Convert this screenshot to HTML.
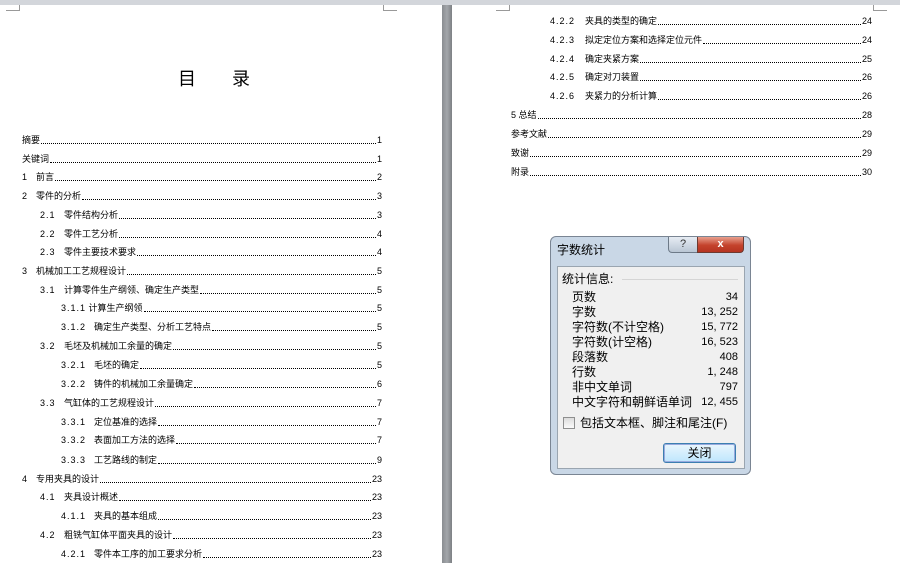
<!DOCTYPE html>
<html><head><meta charset="utf-8"><style>
*{margin:0;padding:0;box-sizing:border-box}
body{width:900px;height:563px;overflow:hidden;background:#fff;position:relative;font-family:"Liberation Sans","Noto Sans CJK SC","WenQuanYi Zen Hei",sans-serif;color:#000}
.r{position:absolute;height:12px;display:flex;align-items:flex-end;font-size:9px;line-height:11px;white-space:nowrap}
.r .f{flex:1;border-bottom:1px dotted #000;margin:0 1px 2px}
.n{display:inline-block;width:24px}
.w{letter-spacing:1px}
.dlg{position:absolute;left:550px;top:236px;width:201px;height:239px;background:#c9d7e6;border:1px solid #7a8593;border-radius:6px}
.inner{position:absolute;left:6px;top:29px;width:188px;height:203px;background:#f0f0f0;border:1px solid #9aa5b0}
.st{position:absolute;left:14px;font-size:12px;line-height:14px;white-space:nowrap}
.sv{position:absolute;right:6px;font-size:11px;line-height:14px}
</style></head><body>
<div style="position:absolute;left:0;top:0;width:900px;height:5px;background:#d3d6db"></div>
<div style="position:absolute;left:442px;top:5px;width:10px;height:558px;background:linear-gradient(90deg,#8a8d91,#a3a6aa 50%,#7d8084)"></div>
<div style="position:absolute;left:6px;top:5px;width:14px;height:6px;border-bottom:1px solid #999;border-right:1px solid #999"></div>
<div style="position:absolute;left:383px;top:5px;width:14px;height:6px;border-bottom:1px solid #999;border-left:1px solid #999"></div>
<div style="position:absolute;left:496px;top:5px;width:14px;height:6px;border-bottom:1px solid #999;border-right:1px solid #999"></div>
<div style="position:absolute;left:873px;top:5px;width:14px;height:6px;border-bottom:1px solid #999;border-left:1px solid #999"></div>
<div style="position:absolute;left:178px;top:68px;font-size:18px;line-height:22px">目</div>
<div style="position:absolute;left:232px;top:68px;font-size:18px;line-height:22px">录</div>

<div class="r" style="left:22px;right:518px;top:134px"><span>摘要</span><span class="f"></span><span>1</span></div>
<div class="r" style="left:22px;right:518px;top:153px"><span>关键词</span><span class="f"></span><span>1</span></div>
<div class="r" style="left:22px;right:518px;top:171px"><span><span style="display:inline-block;width:14px">1</span>前言</span><span class="f"></span><span>2</span></div>
<div class="r" style="left:22px;right:518px;top:190px"><span><span style="display:inline-block;width:14px">2</span>零件的分析</span><span class="f"></span><span>3</span></div>
<div class="r" style="left:40px;right:518px;top:209px"><span><span class="n w">2.1</span>零件结构分析</span><span class="f"></span><span>3</span></div>
<div class="r" style="left:40px;right:518px;top:228px"><span><span class="n w">2.2</span>零件工艺分析</span><span class="f"></span><span>4</span></div>
<div class="r" style="left:40px;right:518px;top:246px"><span><span class="n w">2.3</span>零件主要技术要求</span><span class="f"></span><span>4</span></div>
<div class="r" style="left:22px;right:518px;top:265px"><span><span style="display:inline-block;width:14px">3</span>机械加工工艺规程设计</span><span class="f"></span><span>5</span></div>
<div class="r" style="left:40px;right:518px;top:284px"><span><span class="n w">3.1</span>计算零件生产纲领、确定生产类型</span><span class="f"></span><span>5</span></div>
<div class="r" style="left:61px;right:518px;top:302px"><span><span class="w">3.1.1</span> 计算生产纲领</span><span class="f"></span><span>5</span></div>
<div class="r" style="left:61px;right:518px;top:321px"><span><span class="n w" style="width:33px">3.1.2</span>确定生产类型、分析工艺特点</span><span class="f"></span><span>5</span></div>
<div class="r" style="left:40px;right:518px;top:340px"><span><span class="n w">3.2</span>毛坯及机械加工余量的确定</span><span class="f"></span><span>5</span></div>
<div class="r" style="left:61px;right:518px;top:359px"><span><span class="n w" style="width:33px">3.2.1</span>毛坯的确定</span><span class="f"></span><span>5</span></div>
<div class="r" style="left:61px;right:518px;top:378px"><span><span class="n w" style="width:33px">3.2.2</span>铸件的机械加工余量确定</span><span class="f"></span><span>6</span></div>
<div class="r" style="left:40px;right:518px;top:397px"><span><span class="n w">3.3</span>气缸体的工艺规程设计</span><span class="f"></span><span>7</span></div>
<div class="r" style="left:61px;right:518px;top:416px"><span><span class="n w" style="width:33px">3.3.1</span>定位基准的选择</span><span class="f"></span><span>7</span></div>
<div class="r" style="left:61px;right:518px;top:434px"><span><span class="n w" style="width:33px">3.3.2</span>表面加工方法的选择</span><span class="f"></span><span>7</span></div>
<div class="r" style="left:61px;right:518px;top:454px"><span><span class="n w" style="width:33px">3.3.3</span>工艺路线的制定</span><span class="f"></span><span>9</span></div>
<div class="r" style="left:22px;right:518px;top:473px"><span><span style="display:inline-block;width:14px">4</span>专用夹具的设计</span><span class="f"></span><span>23</span></div>
<div class="r" style="left:40px;right:518px;top:491px"><span><span class="n w">4.1</span>夹具设计概述</span><span class="f"></span><span>23</span></div>
<div class="r" style="left:61px;right:518px;top:510px"><span><span class="n w" style="width:33px">4.1.1</span>夹具的基本组成</span><span class="f"></span><span>23</span></div>
<div class="r" style="left:40px;right:518px;top:529px"><span><span class="n w">4.2</span>粗铣气缸体平面夹具的设计</span><span class="f"></span><span>23</span></div>
<div class="r" style="left:61px;right:518px;top:548px"><span><span class="n w" style="width:33px">4.2.1</span>零件本工序的加工要求分析</span><span class="f"></span><span>23</span></div>

<div class="r" style="left:550px;right:28px;top:15px"><span><span class="n w" style="width:35px">4.2.2</span>夹具的类型的确定</span><span class="f"></span><span>24</span></div>
<div class="r" style="left:550px;right:28px;top:34px"><span><span class="n w" style="width:35px">4.2.3</span>拟定定位方案和选择定位元件</span><span class="f"></span><span>24</span></div>
<div class="r" style="left:550px;right:28px;top:53px"><span><span class="n w" style="width:35px">4.2.4</span>确定夹紧方案</span><span class="f"></span><span>25</span></div>
<div class="r" style="left:550px;right:28px;top:71px"><span><span class="n w" style="width:35px">4.2.5</span>确定对刀装置</span><span class="f"></span><span>26</span></div>
<div class="r" style="left:550px;right:28px;top:90px"><span><span class="n w" style="width:35px">4.2.6</span>夹紧力的分析计算</span><span class="f"></span><span>26</span></div>
<div class="r" style="left:511px;right:28px;top:109px"><span>5 总结</span><span class="f"></span><span>28</span></div>
<div class="r" style="left:511px;right:28px;top:128px"><span>参考文献</span><span class="f"></span><span>29</span></div>
<div class="r" style="left:511px;right:28px;top:147px"><span>致谢</span><span class="f"></span><span>29</span></div>
<div class="r" style="left:511px;right:28px;top:166px"><span>附录</span><span class="f"></span><span>30</span></div>

<div class="dlg">
 <div style="position:absolute;left:6px;top:6px;font-size:12px;line-height:14px">字数统计</div>
 <div style="position:absolute;left:117px;top:0;width:30px;height:16px;background:linear-gradient(#e6ecf3,#b9c6d4);border:1px solid #6d7a88;border-top:none;border-radius:0 0 0 4px;font-size:11px;text-align:center;line-height:14px;color:#333">?</div>
 <div style="position:absolute;left:146px;top:0;width:47px;height:16px;background:linear-gradient(#e9a08e,#c4422c 55%,#b53421);border:1px solid #6d3a30;border-top:none;border-radius:0 0 4px 0;color:#fff;font-size:11px;font-weight:bold;text-align:center;line-height:14px">x</div>
 <div class="inner">
  <div style="position:absolute;left:4px;top:5px;font-size:12px;line-height:14px">统计信息:</div>
  <div style="position:absolute;left:64px;right:6px;top:12px;border-top:1px solid #d5d5d5"></div>
  <div class="st" style="top:23px">页数</div><div class="sv" style="top:23px">34</div>
  <div class="st" style="top:38px">字数</div><div class="sv" style="top:38px">13, 252</div>
  <div class="st" style="top:53px">字符数(不计空格)</div><div class="sv" style="top:53px">15, 772</div>
  <div class="st" style="top:68px">字符数(计空格)</div><div class="sv" style="top:68px">16, 523</div>
  <div class="st" style="top:83px">段落数</div><div class="sv" style="top:83px">408</div>
  <div class="st" style="top:98px">行数</div><div class="sv" style="top:98px">1, 248</div>
  <div class="st" style="top:113px">非中文单词</div><div class="sv" style="top:113px">797</div>
  <div class="st" style="top:128px">中文字符和朝鲜语单词</div><div class="sv" style="top:128px">12, 455</div>
  <div style="position:absolute;left:5px;top:150px;width:12px;height:12px;border:1px solid #8e8f8f;background:linear-gradient(#ddd,#fafafa)"></div>
  <div style="position:absolute;left:22px;top:149px;font-size:12px;line-height:14px">包括文本框、脚注和尾注(F)</div>
  <div style="position:absolute;left:105px;top:176px;width:73px;height:20px;border:1px solid #3c7fb1;border-radius:3px;background:linear-gradient(#eaf6fd,#bee6fd);box-shadow:inset 0 0 0 1px #9ad;font-size:12px;text-align:center;line-height:18px">关闭</div>
 </div>
</div>
</body></html>
